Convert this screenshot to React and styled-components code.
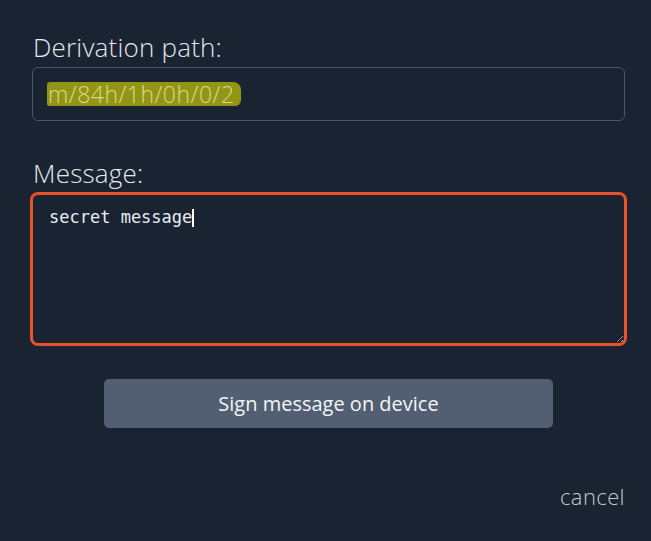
import React from 'react';
import styled, { createGlobalStyle } from 'styled-components';

const GlobalStyle = createGlobalStyle`
  html, body {
    margin: 0;
    padding: 0;
    background: #192332;
  }
  body {
    font-family: 'Open Sans', 'Noto Sans', sans-serif;
  }
`;

const Wrapper = styled.div`
  display: flex;
  flex-direction: column;
  width: 651px;
  height: 541px;
  box-sizing: border-box;
  padding: 31px 26px 0 32px;
  background: #192332;
`;

const Label = styled.label`
  display: block;
  margin: ${({ first }) => (first ? '0 0 4px 1px' : '36px 0 5px 1px')};
  font-size: 26px;
  font-weight: 300;
  line-height: 32px;
  color: #e3e6ea;
  letter-spacing: 0.2px;
`;

const PathBox = styled.div`
  display: flex;
  align-items: center;
  height: 54px;
  box-sizing: border-box;
  padding: 0 15px;
  border: 1px solid #4b5667;
  border-radius: 6px;
`;

const Marked = styled.span`
  padding: 1px 6px 1px 1px;
  margin-left: -1px;
  font-size: 23px;
  font-weight: 300;
  line-height: 22px;
  letter-spacing: 0.5px;
  color: #d6d98e;
  background: #939615;
  border-radius: 3px 8px 6px 2px;
`;

const Field = styled.div`
  position: relative;
`;

const MessageArea = styled.textarea`
  display: block;
  width: 593px;
  height: 150px;
  box-sizing: border-box;
  margin: 0;
  padding: 10px 16px;
  border: 1px solid #e8542a;
  border-radius: 6px;
  outline: none;
  box-shadow: 0 0 0 2px #e8542a;
  background: #192332;
  color: #e9ecef;
  caret-color: transparent;
  font-family: 'DejaVu Sans Mono', monospace;
  font-size: 17px;
  line-height: 24px;
  resize: vertical;
`;

const Caret = styled.span`
  position: absolute;
  left: 160px;
  top: 15px;
  width: 2px;
  height: 18px;
  background: #ffffff;
`;

const Actions = styled.div`
  display: flex;
  justify-content: center;
  margin-top: 35px;
`;

const SignButton = styled.button`
  width: 449px;
  height: 49px;
  border: none;
  border-radius: 5px;
  background: #525f72;
  color: #f3f5f7;
  font-family: 'Open Sans', 'Noto Sans', sans-serif;
  font-size: 20px;
  font-weight: 400;
  cursor: pointer;
`;

const Cancel = styled.a`
  align-self: flex-end;
  margin-top: 55px;
  font-size: 22px;
  font-weight: 300;
  line-height: 26px;
  color: #c3c9d1;
  letter-spacing: 0.4px;
  cursor: pointer;
`;

const App = () => {
  return (
    <>
      <GlobalStyle />
      <Wrapper>
        <Label first>Derivation path:</Label>
        <PathBox>
          <Marked>m/84h/1h/0h/0/2</Marked>
        </PathBox>
        <Label>Message:</Label>
        <Field>
          <MessageArea defaultValue="secret message" spellCheck={false} />
          <Caret />
        </Field>
        <Actions>
          <SignButton>Sign message on device</SignButton>
        </Actions>
        <Cancel>cancel</Cancel>
      </Wrapper>
    </>
  );
};

export default App;
